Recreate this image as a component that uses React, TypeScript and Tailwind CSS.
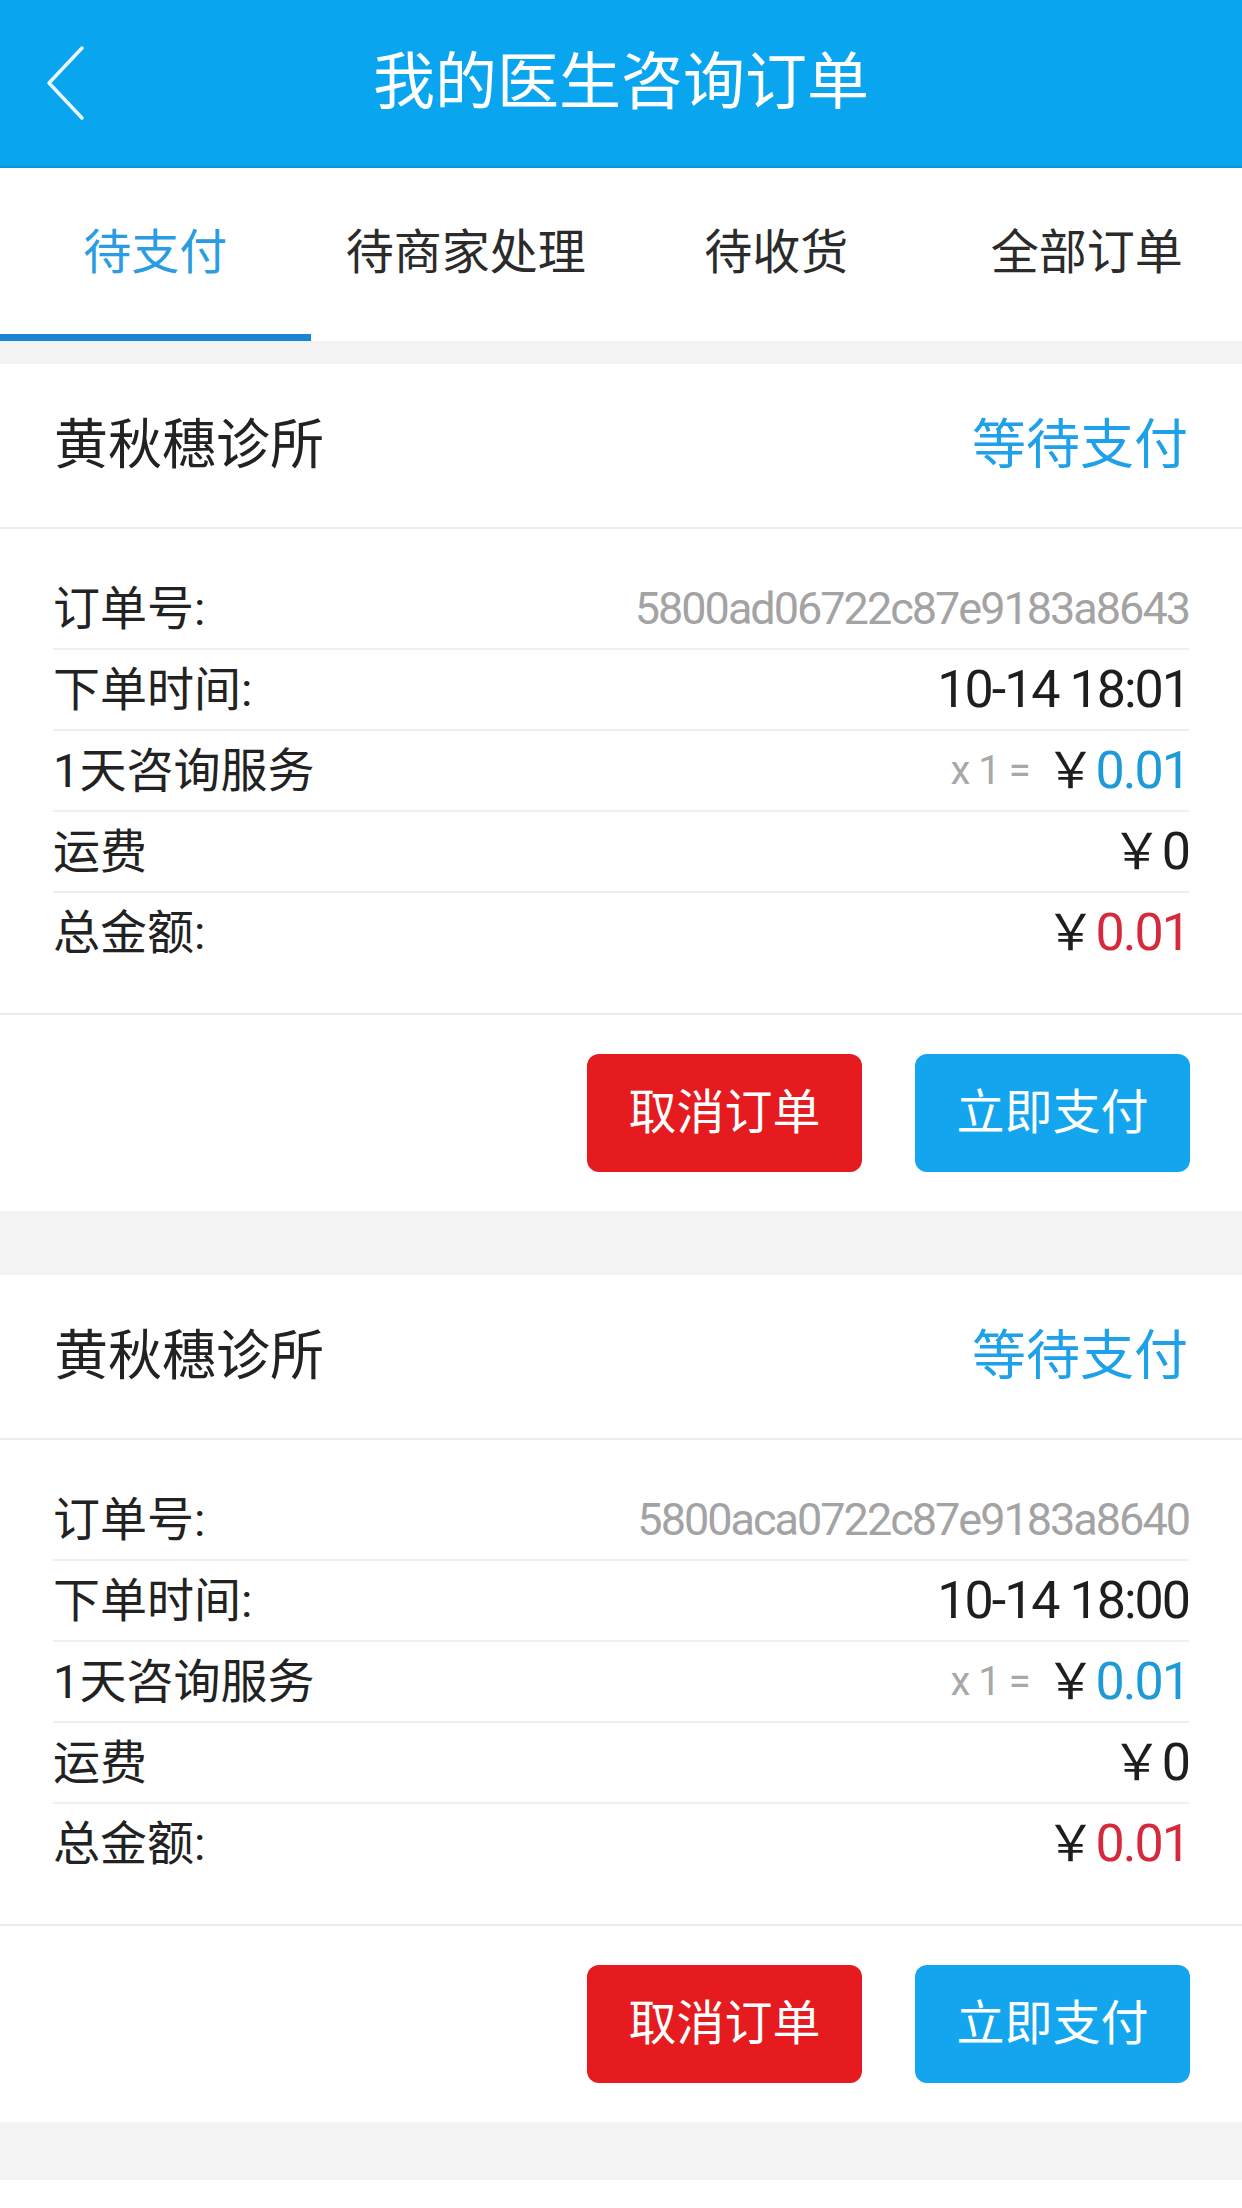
import React from "react";

const FONT = 'Roboto, "Noto Sans CJK SC", "Noto Sans", sans-serif';

type Order = { no: string; time: string };

const orders: Order[] = [
  { no: "5800ad06722c87e9183a8643", time: "10-14 18:01" },
  { no: "5800aca0722c87e9183a8640", time: "10-14 18:00" },
];

function Row({ label, children, last }: { label: string; children: React.ReactNode; last?: boolean }) {
  return (
    <div
      className={
        "flex items-center justify-between " + (last ? "h-[79px]" : "h-[81px] border-b-2 border-[#efefef]")
      }
    >
      <span className="text-[47px] text-[#222222] leading-none">{label}</span>
      <div className="flex items-center leading-none">{children}</div>
    </div>
  );
}

function Yen() {
  return <span className="text-[50px] text-[#1e1e1e]">￥</span>;
}

function OrderCard({ order }: { order: Order }) {
  return (
    <div className="bg-white">
      <div className="h-[165px] px-[54px] flex items-center justify-between border-b-2 border-[#ececec]">
        <span className="text-[54px] text-[#222222] leading-none">黄秋穗诊所</span>
        <span className="text-[54px] text-[#1ea1e9] leading-none">等待支付</span>
      </div>
      <div className="px-[53px] pt-[40px] pb-[41px] border-b-2 border-[#ececec]">
        <Row label="订单号:">
          <span className="text-[45px] tracking-[-2px] text-[#a3a3a3]">{order.no}</span>
        </Row>
        <Row label="下单时间:">
          <span className="text-[52px] tracking-[-2px] text-[#1e1e1e]">{order.time}</span>
        </Row>
        <Row label="1天咨询服务">
          <span className="text-[40px] tracking-[-1px] text-[#a8a8a8] mr-[16px]">x 1 =</span>
          <Yen />
          <span className="text-[52px] tracking-[-2px] text-[#1e9ad8]">0.01</span>
        </Row>
        <Row label="运费">
          <Yen />
          <span className="text-[52px] tracking-[-2px] text-[#1e1e1e]">0</span>
        </Row>
        <Row label="总金额:" last>
          <Yen />
          <span className="text-[52px] tracking-[-2px] text-[#d42a3c]">0.01</span>
        </Row>
      </div>
      <div className="h-[196px] flex items-center justify-end gap-[53px] pr-[52px]">
        <button className="w-[275px] h-[118px] rounded-[12px] bg-[#e51b20] text-white text-[48px] leading-none flex items-center justify-center">
          取消订单
        </button>
        <button className="w-[275px] h-[118px] rounded-[12px] bg-[#13a6ee] text-white text-[48px] leading-none flex items-center justify-center">
          立即支付
        </button>
      </div>
    </div>
  );
}

export default function App() {
  const tabs = ["待支付", "待商家处理", "待收货", "全部订单"];
  return (
    <div className="w-[1242px] min-h-[2208px] bg-white" style={{ fontFamily: FONT }}>
      <div className="h-[168px] bg-[#0aa5ef] grid grid-cols-[1fr_auto_1fr] items-center border-b-2 border-[#0b96d9]">
        <div className="pl-[46px] flex items-center">
          <svg width="40" height="76" viewBox="0 0 40 76" fill="none">
            <polyline points="36,3 3,38 36,73" stroke="#eaf8ff" strokeWidth="3.5" strokeLinecap="round" strokeLinejoin="round" />
          </svg>
        </div>
        <div className="text-white text-[62px] leading-none">我的医生咨询订单</div>
        <div />
      </div>
      <div className="h-[173px] grid grid-cols-4 bg-white">
        {tabs.map((t, i) => (
          <div key={t} className="flex flex-col">
            <div
              className={
                "flex-1 flex items-center justify-center text-[48px] leading-none pt-[4px] " +
                (i === 0 ? "text-[#2a9de2]" : "text-[#2b2b2b]")
              }
            >
              {t}
            </div>
            <div className={"h-[7px] " + (i === 0 ? "bg-[#1784d4]" : "bg-white")} />
          </div>
        ))}
      </div>
      <div className="bg-[#f3f3f3] pt-[23px] pb-[58px] flex flex-col gap-[64px]">
        {orders.map((o) => (
          <OrderCard key={o.no} order={o} />
        ))}
      </div>
    </div>
  );
}
